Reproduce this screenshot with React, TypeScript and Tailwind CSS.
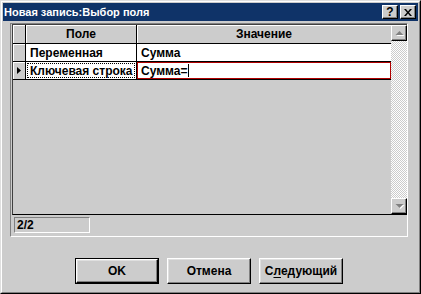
import React from "react";

const raised =
  "bg-[#cccccc] border border-t-white border-l-white border-r-black border-b-black shadow-[inset_-1px_-1px_#808080]";

function ArrowUp() {
  return (
    <svg width="9" height="5" viewBox="0 0 9 5" className="overflow-visible">
      <polygon points="5.5,1 9.5,5 1.5,5" fill="#ffffff" />
      <polygon points="4.5,0 8.5,4 0.5,4" fill="#808080" />
    </svg>
  );
}

function ArrowDown() {
  return (
    <svg width="9" height="5" viewBox="0 0 9 5" className="overflow-visible">
      <polygon points="1.5,1 9.5,1 5.5,5" fill="#ffffff" />
      <polygon points="0.5,0 8.5,0 4.5,4" fill="#808080" />
    </svg>
  );
}

function Btn({ children, isDefault }: { children: React.ReactNode; isDefault?: boolean }) {
  return (
    <div className={`w-[84px] h-[26px] ${isDefault ? "border border-black" : ""}`}>
      <div className="w-full h-full flex items-center justify-center bg-[#cccccc] border border-t-white border-l-white border-r-black border-b-black shadow-[inset_-1px_-1px_#808080,inset_1px_1px_#dfdfdf]">
        {children}
      </div>
    </div>
  );
}

export default function App() {
  return (
    <div className="w-[421px] h-[294px] bg-[#cccccc] font-['Liberation_Sans',Arial,sans-serif] text-[12px] font-bold text-black leading-none border border-t-[#dfdfdf] border-l-[#dfdfdf] border-r-black border-b-black">
      <div className="h-full border border-t-white border-l-white border-r-[#808080] border-b-[#808080] p-px flex flex-col">
        {/* title bar */}
        <div className="h-[18px] bg-[#0f3368] flex items-center pl-[1px] pr-[2px] text-white">
          <span className="flex-1 text-[11px]">Новая запись:Выбор поля</span>
          <div className={`${raised} w-[16px] h-[14px] flex items-center justify-center text-black text-[12px] mr-[2px]`}>
            ?
          </div>
          <div className={`${raised} w-[16px] h-[14px] flex items-center justify-center`}>
            <svg width="8" height="7" viewBox="0 0 8 7">
              <path d="M0 0h2l2 2.5L6 0h2L5 3.5 8 7H6L4 4.5 2 7H0l3-3.5z" fill="#000" />
            </svg>
          </div>
        </div>

        {/* datasheet panel */}
        <div className="ml-[7px] mt-[2px] w-[398px] h-[214px] border border-t-[#808080] border-l-[#808080] border-r-white border-b-white flex flex-col">
          <div className="h-[191px] border-t border-l border-b border-t-[#404040] border-l-[#404040] border-b-black ml-px flex">
            {/* table */}
            <div className="flex-1 flex flex-col">
              <div className="h-[19px] flex border-b border-black">
                <div className="w-[13px] border-r border-black shadow-[inset_1px_1px_#fff]" />
                <div className="w-[111px] border-r border-black shadow-[inset_1px_1px_#fff] flex items-center justify-center">
                  Поле
                </div>
                <div className="flex-1 shadow-[inset_1px_1px_#fff] flex items-center justify-center">Значение</div>
              </div>
              <div className="h-[18px] flex border-b border-black">
                <div className="w-[13px] border-r border-black shadow-[inset_1px_1px_#fff]" />
                <div className="w-[111px] border-r border-black bg-white flex items-center pl-[4px]">Переменная</div>
                <div className="flex-1 bg-white flex items-center pl-[4px]">Сумма</div>
              </div>
              <div className="h-[18px] flex border-b border-black">
                <div className="w-[13px] border-r border-black shadow-[inset_1px_1px_#fff] flex items-center justify-center">
                  <svg width="4" height="7" viewBox="0 0 4 7">
                    <polygon points="0,0 4,3.5 0,7" fill="#000" />
                  </svg>
                </div>
                <div className="w-[111px] border-r border-black bg-white p-px">
                  <div className="h-full border border-dotted border-black flex items-center pl-[2px]">Ключевая строка</div>
                </div>
                <div className="flex-1 bg-white border border-[#b00000] flex items-center pl-[3px]">
                  Сумма=
                  <span className="inline-block w-px h-[13px] bg-black ml-px" />
                </div>
              </div>
            </div>
            {/* scrollbar */}
            <div className="w-[16px] flex flex-col bg-[repeating-conic-gradient(#ffffff_0_25%,#cccccc_0_50%)] bg-[length:2px_2px]">
              <div className={`${raised} h-[16px] flex items-center justify-center`}>
                <ArrowUp />
              </div>
              <div className="flex-1" />
              <div className={`${raised} h-[16px] flex items-center justify-center`}>
                <ArrowDown />
              </div>
            </div>
          </div>
          {/* status */}
          <div className="flex-1 flex items-start pl-[3px] pt-[2px]">
            <div className="w-[76px] h-[16px] border border-t-[#808080] border-l-[#808080] border-r-white border-b-white flex items-center pl-[2px]">
              2/2
            </div>
          </div>
        </div>

        {/* buttons */}
        <div className="mt-[21px] ml-[72px] flex gap-[8px]">
          <Btn isDefault>OK</Btn>
          <Btn>Отмена</Btn>
          <Btn>
            <span>
              С<span className="underline underline-offset-2">л</span>едующий
            </span>
          </Btn>
        </div>
      </div>
    </div>
  );
}
